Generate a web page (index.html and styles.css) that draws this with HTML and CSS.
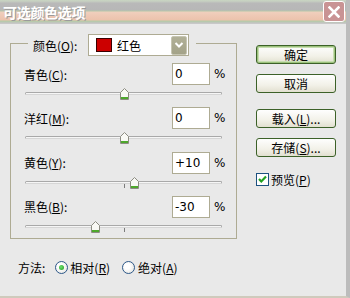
FILE: index.html
```html
<!DOCTYPE html>
<html>
<head>
<meta charset="utf-8">
<link rel="stylesheet" href="styles.css">
</head>
<body>
<div class="window">
  <div class="titlebar">
    <span class="title">可选颜色选项</span>
    <span class="close"><svg width="12" height="12" viewBox="0 0 12 12"><path d="M1.5 1.5 L10.5 10.5 M10.5 1.5 L1.5 10.5" stroke="#fff" stroke-width="2.6" stroke-linecap="square"/></svg></span>
  </div>
  <div class="client">
    <div class="left">
      <div class="group">
        <div class="group-head">
          <span class="lbl">颜色(<u>O</u>):</span>
          <div class="combo">
            <span class="swatch"></span>
            <span class="combo-text">红色</span>
            <span class="combo-btn"><svg width="10" height="8" viewBox="0 0 10 8"><path d="M1.5 2 L5 5.5 L8.5 2" stroke="#fff" stroke-width="2" fill="none"/></svg></span>
          </div>
        </div>
        <div class="rows">
          <div class="row">
            <div class="row-top"><span class="lbl">青色(<u>C</u>):</span><span class="input">0</span><span class="pct">%</span></div>
            <div class="slider"><div class="track"></div><div class="tick"></div><svg class="thumb" style="left:96px" width="9" height="12" viewBox="0 0 9 12"><path d="M0.5 4.5 L4.5 0.5 L8.5 4.5 L8.5 11.5 L0.5 11.5 Z" fill="#f9f9f5" stroke="#8c8c82"/><rect x="1" y="9" width="7" height="2" fill="#4ea82c"/></svg></div>
          </div>
          <div class="row">
            <div class="row-top"><span class="lbl">洋红(<u>M</u>):</span><span class="input">0</span><span class="pct">%</span></div>
            <div class="slider"><div class="track"></div><div class="tick"></div><svg class="thumb" style="left:96px" width="9" height="12" viewBox="0 0 9 12"><path d="M0.5 4.5 L4.5 0.5 L8.5 4.5 L8.5 11.5 L0.5 11.5 Z" fill="#f9f9f5" stroke="#8c8c82"/><rect x="1" y="9" width="7" height="2" fill="#4ea82c"/></svg></div>
          </div>
          <div class="row">
            <div class="row-top"><span class="lbl">黄色(<u>Y</u>):</span><span class="input">+10</span><span class="pct">%</span></div>
            <div class="slider"><div class="track"></div><div class="tick"></div><svg class="thumb" style="left:106px" width="9" height="12" viewBox="0 0 9 12"><path d="M0.5 4.5 L4.5 0.5 L8.5 4.5 L8.5 11.5 L0.5 11.5 Z" fill="#f9f9f5" stroke="#8c8c82"/><rect x="1" y="9" width="7" height="2" fill="#4ea82c"/></svg></div>
          </div>
          <div class="row">
            <div class="row-top"><span class="lbl">黑色(<u>B</u>):</span><span class="input">-30</span><span class="pct">%</span></div>
            <div class="slider"><div class="track"></div><div class="tick"></div><svg class="thumb" style="left:67px" width="9" height="12" viewBox="0 0 9 12"><path d="M0.5 4.5 L4.5 0.5 L8.5 4.5 L8.5 11.5 L0.5 11.5 Z" fill="#f9f9f5" stroke="#8c8c82"/><rect x="1" y="9" width="7" height="2" fill="#4ea82c"/></svg></div>
          </div>
        </div>
      </div>
      <div class="method">
        <span class="lbl">方法:</span>
        <span class="radio checked"></span><span class="opt">相对(<u>R</u>)</span>
        <span class="radio second"></span><span class="opt">绝对(<u>A</u>)</span>
      </div>
    </div>
    <div class="right">
      <div class="btn default">确定</div>
      <div class="btn b2">取消</div>
      <div class="btn b3">载入(<u>L</u>)...</div>
      <div class="btn b4">存储(<u>S</u>)...</div>
      <div class="check-row">
        <span class="checkbox"><svg width="11" height="11" viewBox="0 0 11 11"><path d="M2 5 L4.3 7.5 L9 2.5" stroke="#21a121" stroke-width="2.2" fill="none"/></svg></span>
        <span class="opt">预览(<u>P</u>)</span>
      </div>
    </div>
  </div>
</div>
</body>
</html>
```

FILE: styles.css
```css
* { box-sizing: border-box; }
html, body { margin: 0; padding: 0; }
body {
  width: 350px;
  height: 298px;
  overflow: hidden;
  font-family: "Noto Sans CJK SC", "Noto Sans", sans-serif;
  font-size: 12px;
  color: #000;
}
.window {
  width: 350px;
  height: 298px;
  background: #e9e9e9;
  border-right: 4px solid #bcbcbc;
  border-bottom: 2px solid #cfcabc;
  display: flex;
  flex-direction: column;
}
.titlebar {
  height: 24px;
  flex: none;
  display: flex;
  align-items: center;
  justify-content: space-between;
  padding: 0 0 0 3px;
  background: linear-gradient(to bottom,
    #c9d6c2 0px, #c2c8bf 2px, #b9b9b9 3px, #b7b7b7 10px,
    #b4c8aa 11px, #f0cfbd 12px, #ecc2ac 20px, #b6cca6 21px,
    #b9c6b2 22px, #c6c6c6 23px, #cacaca 24px);
}
.title {
  color: #fff;
  font-weight: bold;
  font-size: 14px;
  line-height: 16px;
  letter-spacing: -0.3px;
  text-shadow: 1px 1px 0 #9a9a9a;
}
.close {
  width: 22px;
  height: 21px;
  margin-right: 1px;
  margin-top: -1px;
  border: 1px solid #fff;
  border-radius: 3px;
  background: #c99394;
  display: flex;
  align-items: center;
  justify-content: center;
}
.client {
  flex: 1;
  display: flex;
}
.left {
  width: 256px;
  flex: none;
}
.group {
  margin: 19px 0 0 10px;
  width: 227px;
  border: 1px solid #aeab93;
  padding-bottom: 3px;
}
.group-head {
  margin: -10px 0 0 17px;
  width: 168px;
  height: 22px;
  padding: 0 7px 0 5px;
  background: #e9e9e9;
  display: flex;
  align-items: center;
}
.lbl { white-space: nowrap; }
.combo {
  margin-left: auto;
  width: 101px;
  height: 22px;
  border: 1px solid #aeab93;
  background: #fff;
  display: flex;
  align-items: center;
  padding: 0 1px 0 7px;
}
.swatch {
  width: 16px;
  height: 14px;
  background: #cc0000;
  border: 1px solid #3a0000;
  flex: none;
}
.combo-text {
  margin-left: 5px;
  flex: 1;
}
.combo-btn {
  width: 16px;
  height: 19px;
  background: linear-gradient(#b1b097, #a3a288);
  border: 1px solid #c6c5b2;
  border-radius: 2px;
  display: flex;
  align-items: center;
  justify-content: center;
}
.rows {
  padding: 7px 11px 0 13px;
  display: flex;
  flex-direction: column;
  gap: 5.33px;
}
.row-top {
  height: 22px;
  display: flex;
  align-items: center;
}
.row-top .lbl { flex: 1; }
.input {
  width: 38px;
  height: 22px;
  border: 1px solid #aeab93;
  background: #fff;
  font-family: "DejaVu Sans", sans-serif;
  font-size: 12px;
  line-height: 20px;
  padding-left: 2px;
  margin-right: 4px;
}
.pct {
  width: 11px;
  font-family: "DejaVu Sans", sans-serif;
  font-size: 12px;
}
.slider {
  position: relative;
  height: 17px;
}
.track {
  position: absolute;
  left: 1px;
  top: 7px;
  width: 197px;
  height: 3px;
  border: 1px solid #a9a9a9;
  border-bottom-color: #d6d6d6;
  border-radius: 2px;
  background: #f6f6f6;
}
.tick {
  position: absolute;
  left: 100px;
  top: 10px;
  width: 1px;
  height: 4px;
  background: #7c7c7c;
}
.thumb {
  position: absolute;
  top: 3px;
  display: block;
}
.method {
  margin-top: 21px;
  padding-left: 18px;
  height: 16px;
  display: flex;
  align-items: center;
}
.radio {
  width: 13px;
  height: 13px;
  border-radius: 50%;
  border: 1px solid #2d5889;
  background: radial-gradient(circle at 40% 40%, #ffffff 30%, #dcdcd6 100%);
  flex: none;
  margin-left: 10px;
  margin-right: 2px;
  position: relative;
}
.radio.checked::after {
  content: "";
  position: absolute;
  left: 3px;
  top: 3px;
  width: 5px;
  height: 5px;
  border-radius: 50%;
  background: radial-gradient(circle at 40% 40%, #6fe06f, #1d9a1d);
}
.radio.second { margin-left: 12px; margin-right: 3px; }
.opt { white-space: nowrap; }
.right {
  width: 80px;
  padding-top: 21px;
  display: flex;
  flex-direction: column;
}
.btn {
  height: 19px;
  border: 1px solid #3c6128;
  border-radius: 3px;
  background: linear-gradient(#fefefe, #f2f1e8 60%, #e2e0d0);
  display: flex;
  align-items: center;
  justify-content: center;
  line-height: 1;
}
.btn.default {
  box-shadow: inset 0 0 0 1px #9cc27c, inset 0 0 0 2px #c7ddb1;
}
.b2 { margin-top: 10px; }
.b3 { margin-top: 16px; }
.b4 { margin-top: 10px; }
.check-row {
  margin-top: 15px;
  display: flex;
  align-items: center;
  height: 14px;
}
.checkbox {
  width: 13px;
  height: 13px;
  border: 1px solid #1c5180;
  background: #fff;
  display: flex;
  align-items: center;
  justify-content: center;
  margin-right: 2px;
}
```
